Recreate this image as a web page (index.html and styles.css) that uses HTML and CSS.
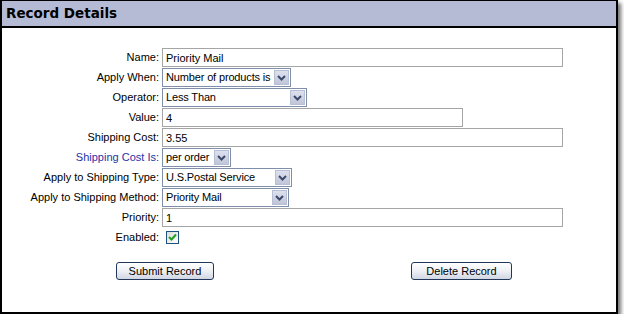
FILE: index.html
```html
<!DOCTYPE html>
<html>

<head>
  <meta charset="utf-8">
  <title>Record Details</title>
  <link rel="stylesheet" href="styles.css">
</head>

<body>
  <div class="panel">
    <div class="panel-head">Record Details</div>

    <div class="record">
      <label class="lbl">Name:</label>
      <div><input class="textbox tb-long" type="text" value="Priority Mail"></div>

      <label class="lbl">Apply When:</label>
      <div class="dd dd-when"><span class="dd-text">Number of products is</span><span class="dd-btn"><svg width="9" height="6" viewBox="0 0 9 6"><path d="M1 1 L4.5 4.5 L8 1" fill="none" stroke="#3b4a6b" stroke-width="2"/></svg></span></div>

      <label class="lbl">Operator:</label>
      <div class="dd dd-op"><span class="dd-text">Less Than</span><span class="dd-btn"><svg width="9" height="6" viewBox="0 0 9 6"><path d="M1 1 L4.5 4.5 L8 1" fill="none" stroke="#3b4a6b" stroke-width="2"/></svg></span></div>

      <label class="lbl">Value:</label>
      <div><input class="textbox tb-mid" type="text" value="4"></div>

      <label class="lbl">Shipping Cost:</label>
      <div><input class="textbox tb-long" type="text" value="3.55"></div>

      <label class="lbl lbl-blue">Shipping Cost Is:</label>
      <div class="dd dd-per"><span class="dd-text">per order</span><span class="dd-btn"><svg width="9" height="6" viewBox="0 0 9 6"><path d="M1 1 L4.5 4.5 L8 1" fill="none" stroke="#3b4a6b" stroke-width="2"/></svg></span></div>

      <label class="lbl">Apply to Shipping Type:</label>
      <div class="dd dd-type"><span class="dd-text">U.S.Postal Service</span><span class="dd-btn"><svg width="9" height="6" viewBox="0 0 9 6"><path d="M1 1 L4.5 4.5 L8 1" fill="none" stroke="#3b4a6b" stroke-width="2"/></svg></span></div>

      <label class="lbl">Apply to Shipping Method:</label>
      <div class="dd dd-method"><span class="dd-text">Priority Mail</span><span class="dd-btn"><svg width="9" height="6" viewBox="0 0 9 6"><path d="M1 1 L4.5 4.5 L8 1" fill="none" stroke="#3b4a6b" stroke-width="2"/></svg></span></div>

      <label class="lbl">Priority:</label>
      <div><input class="textbox tb-long" type="text" value="1"></div>

      <label class="lbl">Enabled:</label>
      <div><span class="check"><svg width="11" height="11" viewBox="0 0 11 11"><path d="M2 5 L4.5 7.5 L9 2.5" fill="none" stroke="#21a121" stroke-width="2"/></svg></span></div>
    </div>

    <div class="actions">
      <button class="btn btn-submit" type="button">Submit Record</button>
      <button class="btn btn-delete" type="button">Delete Record</button>
    </div>
  </div>
</body>

</html>
```

FILE: styles.css
```css
body {
  margin: 0;
  font-family: "Liberation Sans", Arial, sans-serif;
  font-size: 11px;
  color: #000;
  background: #fff;
}

.panel {
  width: 614px;
  height: 311px;
  border: 2px solid #000;
  border-top-width: 1px;
  background: #fff;
  box-shadow: 3px 3px 4px rgba(0, 0, 0, 0.55);
}

.panel-head {
  height: 25px;
  line-height: 25px;
  padding-left: 4px;
  background-color: #b5bbd4;
  border-bottom: 2px solid #000;
  font-family: "DejaVu Sans", sans-serif;
  font-weight: bold;
  font-size: 13.5px;
}

.record {
  display: grid;
  grid-template-columns: 157px 1fr;
  column-gap: 3px;
  grid-auto-rows: 20px;
  align-items: start;
  padding-top: 20px;
}

.lbl {
  text-align: right;
  line-height: 19px;
  white-space: nowrap;
}

.lbl-blue {
  color: #1f33a6;
}

.textbox {
  display: block;
  height: 19px;
  box-sizing: border-box;
  margin: 0;
  border: 1px solid #a5a5a5;
  padding: 0 3px;
  font-family: "Liberation Sans", Arial, sans-serif;
  font-size: 11px;
  color: #000;
  outline: none;
}

.tb-long {
  width: 401px;
}

.tb-mid {
  width: 301px;
}

.dd {
  display: flex;
  height: 19px;
  box-sizing: border-box;
  border: 1px solid #7f8ea9;
  background: #fff;
}

.dd-text {
  flex: 1;
  padding-left: 3px;
  line-height: 17px;
  letter-spacing: -0.15px;
  white-space: nowrap;
  overflow: hidden;
}

.dd-btn {
  width: 15px;
  margin: 1px;
  box-sizing: border-box;
  border: 1px solid #b7bfd6;
  background: linear-gradient(#dde1ee, #c0c5d8);
  display: flex;
  align-items: center;
  justify-content: center;
}

.dd-when {
  width: 129px;
}

.dd-op {
  width: 145px;
}

.dd-per {
  width: 69px;
}

.dd-type {
  width: 130px;
}

.dd-method {
  width: 127px;
}

.check {
  display: flex;
  align-items: center;
  justify-content: center;
  width: 13px;
  height: 13px;
  box-sizing: border-box;
  margin: 3px 0 0 4px;
  border: 1px solid #1c5180;
  background: linear-gradient(135deg, #dcdcd7, #fff);
}

.actions {
  display: flex;
  gap: 197px;
  padding: 14px 0 0 114px;
}

.btn {
  height: 18px;
  padding: 0;
  border: 1px solid #22385a;
  border-radius: 3px;
  background: linear-gradient(#ffffff, #eef0f5 50%, #d2d6e3);
  font-family: "Liberation Sans", Arial, sans-serif;
  font-size: 11px;
  color: #000;
  cursor: pointer;
}

.btn-submit {
  width: 98px;
}

.btn-delete {
  width: 101px;
}
```
